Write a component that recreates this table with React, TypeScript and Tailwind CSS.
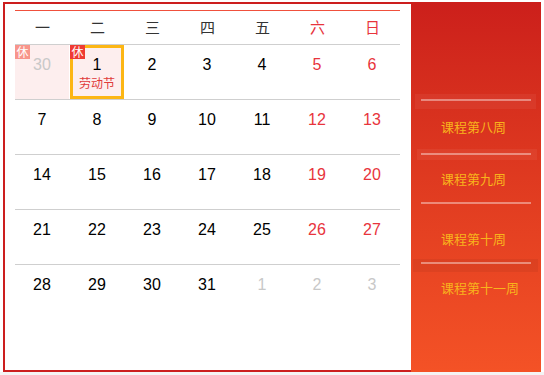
import clsx from "clsx";

const weekdays = ["一", "二", "三", "四", "五", "六", "日"];

const weeks = [
  [30, 1, 2, 3, 4, 5, 6],
  [7, 8, 9, 10, 11, 12, 13],
  [14, 15, 16, 17, 18, 19, 20],
  [21, 22, 23, 24, 25, 26, 27],
  [28, 29, 30, 31, 1, 2, 3],
];

const cjk = { fontFamily: '"Noto Sans CJK SC", "Liberation Sans", sans-serif' };

function isOther(w: number, d: number) {
  return (w === 0 && d === 0) || (w === 4 && d >= 4);
}

function DayCell({ w, d, day }: { w: number; d: number; day: number }) {
  const other = isOther(w, d);
  const weekend = d >= 5;
  const rest = w === 0 && d === 0;
  const today = w === 0 && d === 1;

  return (
    <div className="relative flex-1 h-full">
      <div
        className={clsx(
          "h-full mr-px flex flex-col items-center",
          (rest || today) && "bg-[#fdeeee]",
          today && "border-[3px] border-[#fcb614]"
        )}
      >
        <span
          className={clsx(
            "text-[16px] leading-5",
            today ? "pt-[7px]" : "pt-[10px]",
            other ? "text-[#c8c8c8]" : weekend ? "text-[#e8343c]" : "text-black"
          )}
        >
          {day}
        </span>
        {today && (
          <span className="text-[12px] leading-4 text-[#e03a3a]" style={cjk}>
            劳动节
          </span>
        )}
      </div>
      {(rest || today) && (
        <span
          className={clsx(
            "absolute left-0 top-0 w-[15px] h-[14px] text-[12px] leading-[14px] text-white text-center",
            rest ? "bg-[#f8958b]" : "bg-[#ef3b33]"
          )}
          style={cjk}
        >
          休
        </span>
      )}
    </div>
  );
}

function WeekLine({ className, lineClass }: { className: string; lineClass: string }) {
  return (
    <div className={className}>
      <div className={clsx("h-[2px] bg-white/40", lineClass)} />
    </div>
  );
}

function WeekLabel({ text, className }: { text: string; className: string }) {
  return (
    <div className={clsx("flex items-center pl-[30px] text-[13px] text-[#f8b41c]", className)} style={cjk}>
      {text}
    </div>
  );
}

export default function App() {
  return (
    <div className="min-h-screen bg-[#f4f4f4]" style={{ fontFamily: '"Liberation Sans", Arial, sans-serif' }}>
      <div className="h-[372px] bg-white pt-[2px] pl-[3px]">
        <div className="flex w-[538px] h-[370px]">
          {/* calendar */}
          <div className="w-[408px] h-full border-l-2 border-t-2 border-b-2 border-[#cc1e1e] pt-[6px] pl-[10px] pr-[11px]">
            <div className="h-px bg-[#f0503c]" />
            <div className="flex h-[34px] border-b border-[#cfcfcf]">
              {weekdays.map((w, i) => (
                <div
                  key={w}
                  className={clsx(
                    "flex-1 flex items-center justify-center text-[15px]",
                    i >= 5 ? "text-[#e8343c]" : "text-[#333]"
                  )}
                  style={cjk}
                >
                  {w}
                </div>
              ))}
            </div>
            {weeks.map((week, wi) => (
              <div
                key={wi}
                className={clsx("flex h-[55px]", wi < weeks.length - 1 && "border-b border-[#cfcfcf]")}
              >
                {week.map((day, di) => (
                  <DayCell key={di} w={wi} d={di} day={day} />
                ))}
              </div>
            ))}
          </div>

          {/* week list */}
          <div className="w-[130px] h-full bg-gradient-to-b from-[#cc1f1b] to-[#f45226] pt-[92px]">
            <WeekLine className="h-[15px] ml-[4px] mr-[5px] pt-[5px] bg-white/5" lineClass="ml-[6px] mr-[5px]" />
            <WeekLabel text="课程第八周" className="h-[40px] pb-[4px]" />
            <WeekLine className="h-[11px] ml-[6px] mr-[4px] pt-[4px] bg-white/5" lineClass="ml-[4px] mr-[6px]" />
            <WeekLabel text="课程第九周" className="h-[38px]" />
            <WeekLine className="h-[8px] pt-[4px]" lineClass="mx-[10px]" />
            <WeekLabel text="课程第十周" className="h-[53px] pt-[12px]" />
            <WeekLine className="h-[13px] ml-[2px] mr-[3px] pt-[3px] bg-black/5" lineClass="ml-[8px] mr-[7px]" />
            <WeekLabel text="课程第十一周" className="h-[32px]" />
          </div>
        </div>
      </div>
    </div>
  );
}
